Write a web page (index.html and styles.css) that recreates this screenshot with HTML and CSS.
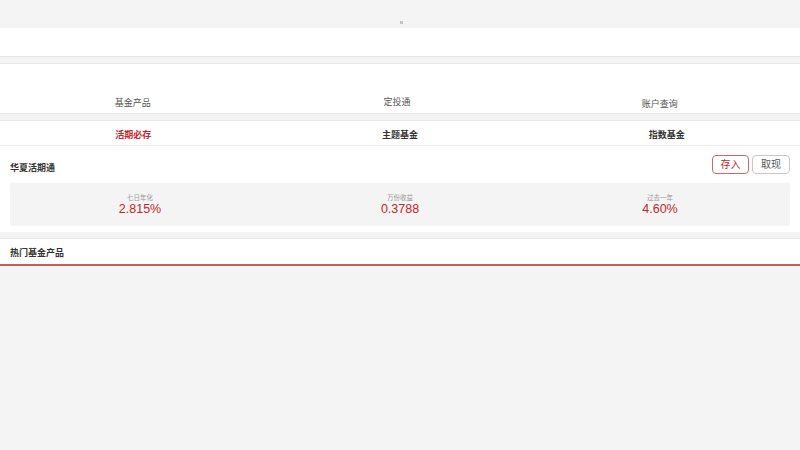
FILE: index.html
```html
<!DOCTYPE html>
<html lang="zh">
<head>
<meta charset="utf-8">
<title>基金</title>
<link rel="stylesheet" href="styles.css">
</head>
<body>
<div class="top"><span class="dot"></span></div>
<div class="bar"></div>
<div class="gap"></div>
<nav class="nav">
  <div class="nav-item n1">基金产品</div>
  <div class="nav-item n2">定投通</div>
  <div class="nav-item n3">账户查询</div>
</nav>
<div class="gap"></div>
<div class="tabs">
  <div class="tab active">活期必存</div>
  <div class="tab">主题基金</div>
  <div class="tab">指数基金</div>
</div>
<section class="card">
  <div class="card-head">
    <div class="card-title">华夏活期通</div>
    <div class="btns">
      <button class="btn btn-red">存入</button>
      <button class="btn">取现</button>
    </div>
  </div>
  <div class="stats">
    <div class="stat"><div class="label">七日年化</div><div class="value">2.815%</div></div>
    <div class="stat"><div class="label">万份收益</div><div class="value">0.3788</div></div>
    <div class="stat"><div class="label">过去一年</div><div class="value">4.60%</div></div>
  </div>
</section>
<div class="gap"></div>
<div class="hot">热门基金产品</div>
</body>
</html>
```
FILE: styles.css
```css
* { box-sizing: border-box; }
html, body { margin: 0; padding: 0; }
body {
  background: #f4f4f4;
  font-family: "Liberation Sans", Arial, "Noto Sans CJK SC", sans-serif;
  color: #333;
}
.top {
  height: 28px;
  display: flex;
  justify-content: center;
  align-items: flex-end;
  padding-bottom: 4px;
}
.dot {
  width: 3px;
  height: 3px;
  background: #c4c4c4;
  margin-left: 2px;
}
.bar {
  height: 29px;
  background: #fff;
  border-bottom: 1px solid #e6e6e6;
}
.gap {
  height: 7px;
  border-bottom: 1px solid #e8e8e8;
}
.nav {
  height: 50px;
  background: #fff;
  display: grid;
  grid-template-columns: 1fr 1fr 1fr;
  align-items: end;
  border-bottom: 1px solid #e8e8e8;
}
.nav-item {
  text-align: center;
  font-size: 9px;
  color: #555;
  line-height: 10px;
}
.n1 { padding-bottom: 5px; padding-right: 1px; }
.n2 { padding-bottom: 6px; padding-right: 6px; }
.n3 { padding-bottom: 4px; padding-right: 14px; }
.tabs {
  height: 25px;
  background: #fff;
  display: grid;
  grid-template-columns: 1fr 1fr 1fr;
  align-items: center;
  padding-top: 3px;
  border-bottom: 1px solid #ececec;
}
.tab {
  text-align: center;
  font-size: 9px;
  font-weight: bold;
  color: #333;
  line-height: 10px;
}
.tab.active { color: #c3272b; }
.card {
  background: #fff;
  padding: 9px 10px 6px;
}
.card-head {
  display: flex;
  justify-content: space-between;
  align-items: center;
  height: 19px;
}
.card-title {
  font-size: 9px;
  font-weight: bold;
  color: #333;
  padding-top: 5px;
}
.btns { display: flex; gap: 3px; }
.btn {
  width: 38px;
  height: 19px;
  border: 1px solid #c8c8c8;
  border-radius: 4px;
  background: #fff;
  font-family: inherit;
  font-size: 10px;
  color: #555;
  padding: 0;
  line-height: 17px;
}
.btn-red { border-color: #d46466; color: #c3272b; width: 37px; }
.stats {
  margin-top: 9px;
  height: 43px;
  background: #f4f4f4;
  border-radius: 2px;
  display: grid;
  grid-template-columns: 1fr 1fr 1fr;
  align-content: center;
}
.stat { text-align: center; }
.label {
  font-size: 6.5px;
  color: #999;
  line-height: 8px;
}
.value {
  font-size: 12.5px;
  color: #c3272b;
  line-height: 14px;
}
.hot {
  height: 27px;
  background: #fff;
  border-bottom: 2px solid #c95b5a;
  font-size: 9px;
  font-weight: bold;
  color: #333;
  padding: 7px 10px 0;
}
```
